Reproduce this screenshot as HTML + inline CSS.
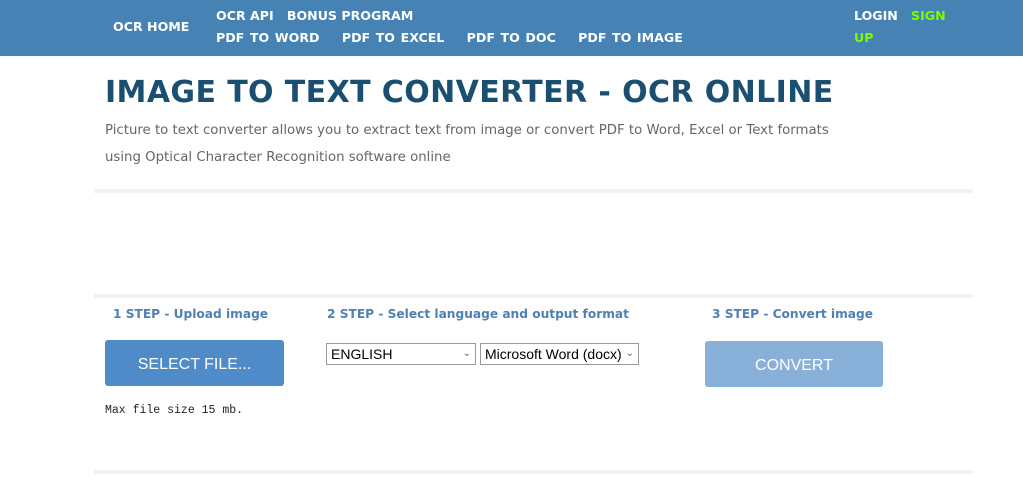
<!DOCTYPE html>
<html><head><style>
body{margin:0;width:1023px;height:481px;background:#fff;font-family:"DejaVu Sans","Liberation Sans",sans-serif;position:relative;overflow:hidden}
.nav{position:absolute;left:0;top:0;width:1023px;height:56px;background:#4682b4}
.n{position:absolute;color:#fff;font-weight:bold;font-size:12.6px;white-space:nowrap}
.g{color:#7cfc00}
h1{position:absolute;left:105px;top:75px;margin:0;font-size:30px;color:#1b4f72;font-family:"DejaVu Sans",sans-serif;font-weight:bold;letter-spacing:0.4px;white-space:nowrap}
.p{position:absolute;left:105px;font-size:13.3px;color:#666;white-space:nowrap}
.hr{position:absolute;left:94px;width:879px;height:4px;background:#f2f2f2}
.s{position:absolute;font-size:12.2px;font-weight:bold;color:#4f81b4;white-space:nowrap}
.btn{position:absolute;height:46px;border-radius:3px;color:#fff;font-size:16px;font-family:"Liberation Sans",sans-serif;display:flex;align-items:center;justify-content:center;padding-top:4px;box-sizing:border-box}
.sel{position:absolute;top:343px;border:1px solid #999;font-family:"Liberation Sans",sans-serif;font-size:14px;line-height:20px;padding-left:4px;box-sizing:border-box;height:22px}
.sel span{position:absolute;right:4px;top:0;font-size:10px;color:#666}
</style></head><body>
<div class="nav">
<div class="n" style="left:113px;top:19px">OCR HOME</div>
<div class="n" style="left:216px;top:8px">OCR API&nbsp;&nbsp; BONUS PROGRAM</div>
<div class="n" style="left:216px;top:30px;word-spacing:1.2px">PDF TO WORD&nbsp;&nbsp;&nbsp; PDF TO EXCEL&nbsp;&nbsp;&nbsp; PDF TO DOC&nbsp;&nbsp;&nbsp; PDF TO IMAGE</div>
<div class="n" style="left:854px;top:8px">LOGIN&nbsp;&nbsp; <span class="g">SIGN</span></div>
<div class="n g" style="left:854px;top:30px">UP</div>
</div>
<h1>IMAGE TO TEXT CONVERTER - OCR ONLINE</h1>
<div class="p" style="top:123px">Picture to text converter allows you to extract text from image or convert PDF to Word, Excel or Text formats</div>
<div class="p" style="top:150px">using Optical Character Recognition software online</div>
<div class="hr" style="top:189px"></div>
<div class="hr" style="top:294px"></div>
<div class="hr" style="top:470px"></div>
<div class="s" style="left:113px;top:307px">1 STEP - Upload image</div>
<div class="s" style="left:327px;top:307px">2 STEP - Select language and output format</div>
<div class="s" style="left:712px;top:307px">3 STEP - Convert image</div>
<div class="btn" style="left:105px;top:340px;width:179px;background:#4f8ac9">SELECT FILE...</div>
<div class="btn" style="left:705px;top:341px;width:178px;background:#88b0d8">CONVERT</div>
<div class="sel" style="left:326px;width:150px">ENGLISH<span>&#8964;</span></div>
<div class="sel" style="left:480px;width:159px">Microsoft Word (docx)<span>&#8964;</span></div>
<div style="position:absolute;left:105px;top:404px;font-family:'Liberation Mono',monospace;font-size:11.5px;color:#222">Max file size 15 mb.</div>
</body></html>
